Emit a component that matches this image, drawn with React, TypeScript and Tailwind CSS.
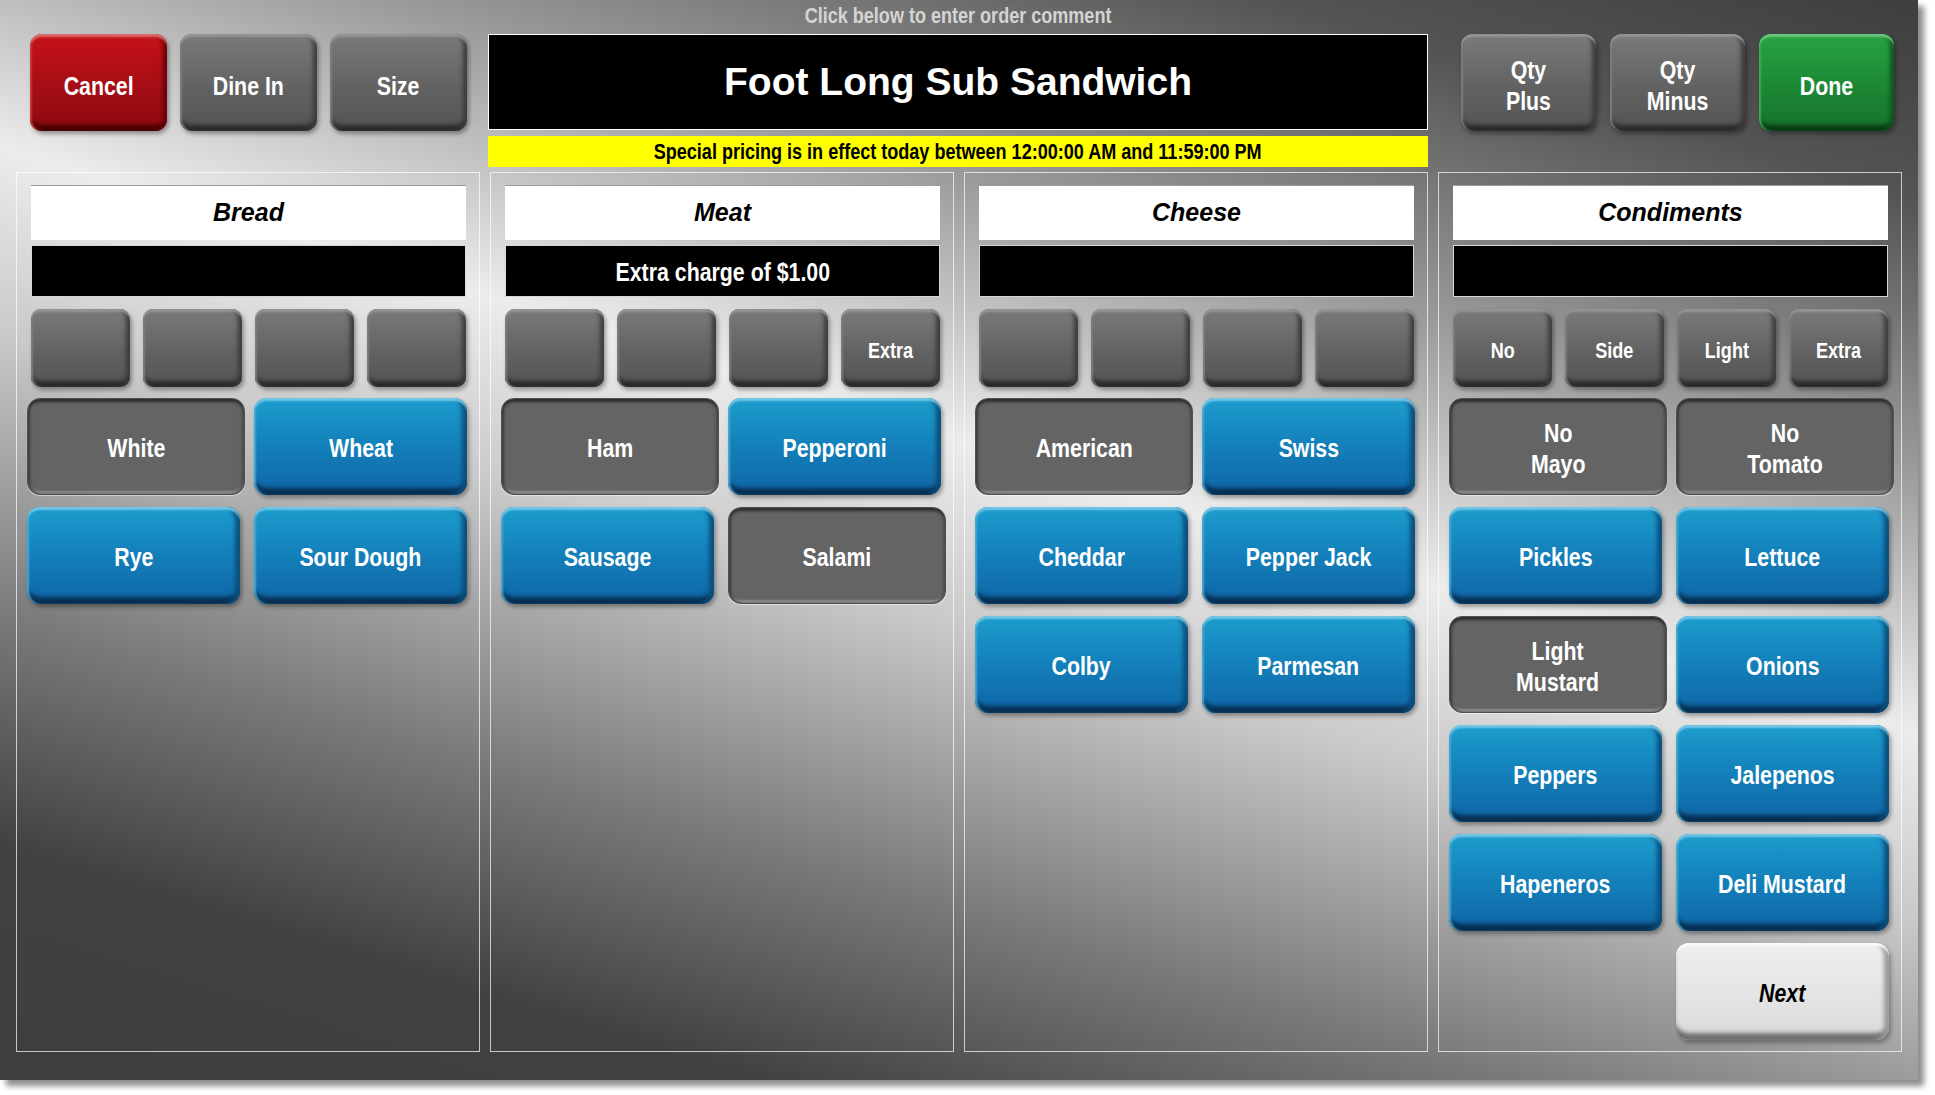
import React from 'react';

type Variant = 'blue' | 'gray' | 'pressed' | 'red' | 'green' | 'light';

// Arial Narrow is not installed, so bold Liberation Sans is squeezed horizontally instead
const SANS = "font-['Liberation_Sans',Arial,sans-serif]";

const looks: Record<Variant, string> = {
  blue:
    'text-white bg-[linear-gradient(#1d9dcd,#1482bc_45%,#0f65a5)] shadow-[inset_0_4px_2px_-1px_#74c6e6,inset_3px_0_2px_-1px_#46aad4,inset_-7px_0_4px_-2px_#0b4f7c,inset_0_-9px_4px_-2px_#072f52,2px_3px_4px_rgba(0,0,0,0.35)]',
  gray:
    'text-white bg-[linear-gradient(#7a7a7a,#606060_60%,#545454)] shadow-[inset_0_4px_2px_-1px_#949494,inset_3px_0_2px_-1px_#7e7e7e,inset_-6px_0_4px_-2px_#3c3c3c,inset_0_-8px_4px_-2px_#2a2a2a,2px_3px_4px_rgba(0,0,0,0.35)]',
  pressed:
    'text-white bg-[#646464] border border-[#505050] shadow-[inset_0_5px_3px_-2px_#2e2e2e,inset_3px_0_3px_-1px_#3c3c3c,inset_-3px_0_3px_-1px_#4a4a4a,inset_0_-4px_2px_-1px_#8e8e8e,0_1px_1px_rgba(255,255,255,0.5)]',
  red:
    'text-white bg-[linear-gradient(#c6121b,#a50d14_55%,#8a0a0f)] shadow-[inset_0_4px_2px_-1px_#dc6a6a,inset_3px_0_2px_-1px_#c63a3a,inset_-6px_0_4px_-2px_#6a0006,inset_0_-8px_4px_-2px_#440000,2px_3px_4px_rgba(0,0,0,0.35)]',
  green:
    'text-white bg-[linear-gradient(#28a343,#1d8a36_50%,#16722d)] shadow-[inset_0_4px_2px_-1px_#68c87c,inset_3px_0_2px_-1px_#3fae55,inset_-6px_0_4px_-2px_#0f5422,inset_0_-8px_4px_-2px_#0a3816,2px_3px_4px_rgba(0,0,0,0.35)]',
  light:
    'text-black italic bg-[linear-gradient(#eeeeee,#e3e3e3_60%,#d8d8d8)] shadow-[inset_0_4px_2px_-1px_#fafafa,inset_-7px_0_4px_-2px_#9a9a9a,inset_0_-9px_4px_-2px_#707070,2px_3px_4px_rgba(0,0,0,0.3)]',
};

const Narrow: React.FC<{ children?: React.ReactNode }> = ({ children }) => (
  <span className="inline-block scale-x-[0.82] whitespace-pre-line">{children}</span>
);

const Btn: React.FC<{ v: Variant; className?: string; children?: React.ReactNode }> = ({ v, className, children }) => (
  <div
    className={`${looks[v]} ${SANS} font-bold flex items-center justify-center text-center leading-[31px] ${className ?? ''}`}
  >
    {children ? <Narrow>{children}</Narrow> : null}
  </div>
);

type Item = { label: string; v: Variant } | null;

const panels: { title: string; note: string; mods: string[]; items: Item[] }[] = [
  {
    title: 'Bread',
    note: '',
    mods: ['', '', '', ''],
    items: [
      { label: 'White', v: 'pressed' },
      { label: 'Wheat', v: 'blue' },
      { label: 'Rye', v: 'blue' },
      { label: 'Sour Dough', v: 'blue' },
    ],
  },
  {
    title: 'Meat',
    note: 'Extra charge of $1.00',
    mods: ['', '', '', 'Extra'],
    items: [
      { label: 'Ham', v: 'pressed' },
      { label: 'Pepperoni', v: 'blue' },
      { label: 'Sausage', v: 'blue' },
      { label: 'Salami', v: 'pressed' },
    ],
  },
  {
    title: 'Cheese',
    note: '',
    mods: ['', '', '', ''],
    items: [
      { label: 'American', v: 'pressed' },
      { label: 'Swiss', v: 'blue' },
      { label: 'Cheddar', v: 'blue' },
      { label: 'Pepper Jack', v: 'blue' },
      { label: 'Colby', v: 'blue' },
      { label: 'Parmesan', v: 'blue' },
    ],
  },
  {
    title: 'Condiments',
    note: '',
    mods: ['No', 'Side', 'Light', 'Extra'],
    items: [
      { label: 'No\nMayo', v: 'pressed' },
      { label: 'No\nTomato', v: 'pressed' },
      { label: 'Pickles', v: 'blue' },
      { label: 'Lettuce', v: 'blue' },
      { label: 'Light\nMustard', v: 'pressed' },
      { label: 'Onions', v: 'blue' },
      { label: 'Peppers', v: 'blue' },
      { label: 'Jalepenos', v: 'blue' },
      { label: 'Hapeneros', v: 'blue' },
      { label: 'Deli Mustard', v: 'blue' },
      null,
      { label: 'Next', v: 'light' },
    ],
  },
];

const Panel: React.FC<{ p: (typeof panels)[number] }> = ({ p }) => (
  <div className="w-[464px] h-[880px] border border-white/70 px-[10px] pt-[12px]">
    {/* header + info bar */}
    <div className="mx-[4px] w-[435px]">
      <div className={`h-[55px] bg-white border-t border-[#9a9a9a] flex items-center justify-center text-[25px] font-bold italic text-black ${SANS}`}>
        {p.title}
      </div>
      <div className={`mt-[5px] h-[52px] bg-black border border-[#d6d6d6] flex items-center justify-center pt-[3px] text-white text-[26px] font-bold ${SANS}`}>
        {p.note && <Narrow>{p.note}</Narrow>}
      </div>
      <div className="mt-[12px] flex justify-between">
        {p.mods.map((m, i) => (
          <Btn key={i} v="gray" className="w-[99px] h-[78px] rounded-[10px] text-[22px] pt-[5px]">
            {m}
          </Btn>
        ))}
      </div>
    </div>

    {/* item buttons */}
    <div className="mt-[11px] grid grid-cols-[213px_213px] gap-x-[14px] gap-y-[12px] auto-rows-[97px]">
      {p.items.map((it, i) =>
        it ? (
          <Btn
            key={i}
            v={it.v}
            className={`h-[97px] rounded-[13px] text-[26px] pt-[4px] ${it.v === 'pressed' ? 'w-[218px]' : 'w-[213px]'}`}
          >
            {it.label}
          </Btn>
        ) : (
          <div key={i} />
        )
      )}
    </div>
  </div>
);

const App: React.FC = () => {
  return (
    <div className="w-[1935px] h-[1095px] bg-white overflow-hidden">
      <div className="w-[1918px] h-[1080px] shadow-[6px_6px_6px_rgba(0,0,0,0.45)] bg-[linear-gradient(197deg,#3e3e3e_0%,#545454_12%,#9a9a9a_28%,#ececec_44%,#cacaca_55%,#7a7a7a_72%,#414141_86%,#3e3e3e_100%)] flex flex-col">
        {/* top bar */}
        <div className="h-[172px] flex pl-[30px]">
          <div className="flex gap-[13px] pt-[34px]">
            <Btn v="red" className="w-[137px] h-[97px] rounded-[12px] text-[26px] pt-[8px]">Cancel</Btn>
            <Btn v="gray" className="w-[137px] h-[97px] rounded-[12px] text-[26px] pt-[8px]">Dine In</Btn>
            <Btn v="gray" className="w-[137px] h-[97px] rounded-[12px] text-[26px] pt-[8px]">Size</Btn>
          </div>

          <div className="ml-[21px] w-[940px] flex flex-col">
            <div className={`h-[34px] leading-[31px] text-center text-[22px] font-bold text-[#d4d4d4] ${SANS}`}>
              <Narrow>Click below to enter order comment</Narrow>
            </div>
            <div className={`h-[96px] bg-black border border-white flex items-center justify-center text-white text-[39px] font-bold ${SANS}`}>
              Foot Long Sub Sandwich
            </div>
            <div className={`mt-[6px] h-[31px] bg-[#ffff00] flex items-center justify-center text-black text-[22px] font-bold ${SANS}`}>
              <Narrow>Special pricing is in effect today between 12:00:00 AM and 11:59:00 PM</Narrow>
            </div>
          </div>

          <div className="ml-[33px] flex gap-[14px] pt-[34px]">
            <Btn v="gray" className="w-[135px] h-[97px] rounded-[12px] text-[26px] leading-[30px] pt-[6px]">{'Qty\nPlus'}</Btn>
            <Btn v="gray" className="w-[135px] h-[97px] rounded-[12px] text-[26px] leading-[30px] pt-[6px]">{'Qty\nMinus'}</Btn>
            <Btn v="green" className="w-[135px] h-[97px] rounded-[12px] text-[26px] pt-[8px]">Done</Btn>
          </div>
        </div>

        {/* option panels */}
        <div className="flex gap-[10px] pl-[16px]">
          {panels.map((p) => (
            <Panel key={p.title} p={p} />
          ))}
        </div>
      </div>
    </div>
  );
};

export default App;
